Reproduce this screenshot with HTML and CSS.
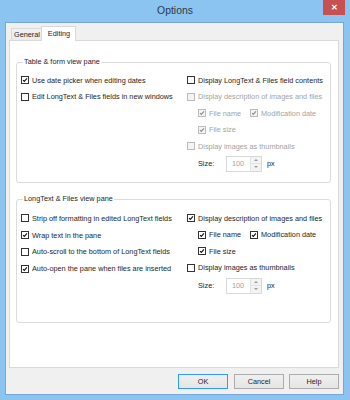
FILE: index.html
```html
<!DOCTYPE html>
<html>
<head>
<meta charset="utf-8">
<link rel="stylesheet" href="styles.css">
</head>
<body>
<div class="window">
  <div class="titlebar">
    <span></span>
    <span class="title">Options</span>
    <span class="close">&#x2715;</span>
  </div>
  <div class="client">
    <div class="tabs">
      <div class="tab">General</div>
      <div class="tab active">Editing</div>
    </div>
    <div class="panel">
      <div class="group g1">
        <div class="group-title">Table &amp; form view pane</div>
        <div class="cols">
          <div class="col left">
            <div class="row"><span class="cb on"><svg viewBox="0 0 8 8"><path d="M1.4 4.1 L3.1 5.8 L6.6 1.9"/></svg></span>Use date picker when editing dates</div>
            <div class="row"><span class="cb"></span>Edit LongText &amp; Files fields in new windows</div>
          </div>
          <div class="col right">
            <div class="row"><span class="cb"></span>Display LongText &amp; Files field contents</div>
            <div class="row dis"><span class="cb"></span>Display description of images and files</div>
            <div class="row dis sub"><span class="item"><span class="cb on"><svg viewBox="0 0 8 8"><path d="M1.4 4.1 L3.1 5.8 L6.6 1.9"/></svg></span>File name</span><span class="cb on"><svg viewBox="0 0 8 8"><path d="M1.4 4.1 L3.1 5.8 L6.6 1.9"/></svg></span>Modification date</div>
            <div class="row dis sub"><span class="cb on"><svg viewBox="0 0 8 8"><path d="M1.4 4.1 L3.1 5.8 L6.6 1.9"/></svg></span>File size</div>
            <div class="row dis"><span class="cb"></span>Display images as thumbnails</div>
            <div class="row size sub"><span class="lbl">Size:</span><span class="spin"><span class="val">100</span><span class="arrows"><span class="up"></span><span class="down"></span></span></span><span class="px">px</span></div>
          </div>
        </div>
      </div>
      <div class="group g2">
        <div class="group-title">LongText &amp; Files view pane</div>
        <div class="cols">
          <div class="col left">
            <div class="row"><span class="cb"></span>Strip off formatting in edited LongText fields</div>
            <div class="row"><span class="cb on"><svg viewBox="0 0 8 8"><path d="M1.4 4.1 L3.1 5.8 L6.6 1.9"/></svg></span>Wrap text in the pane</div>
            <div class="row"><span class="cb"></span>Auto-scroll to the bottom of LongText fields</div>
            <div class="row"><span class="cb on"><svg viewBox="0 0 8 8"><path d="M1.4 4.1 L3.1 5.8 L6.6 1.9"/></svg></span>Auto-open the pane when files are inserted</div>
          </div>
          <div class="col right">
            <div class="row"><span class="cb on"><svg viewBox="0 0 8 8"><path d="M1.4 4.1 L3.1 5.8 L6.6 1.9"/></svg></span>Display description of images and files</div>
            <div class="row sub"><span class="item"><span class="cb on"><svg viewBox="0 0 8 8"><path d="M1.4 4.1 L3.1 5.8 L6.6 1.9"/></svg></span>File name</span><span class="cb on"><svg viewBox="0 0 8 8"><path d="M1.4 4.1 L3.1 5.8 L6.6 1.9"/></svg></span>Modification date</div>
            <div class="row sub"><span class="cb on"><svg viewBox="0 0 8 8"><path d="M1.4 4.1 L3.1 5.8 L6.6 1.9"/></svg></span>File size</div>
            <div class="row"><span class="cb"></span>Display images as thumbnails</div>
            <div class="row size sub tall"><span class="lbl">Size:</span><span class="spin"><span class="val">100</span><span class="arrows"><span class="up"></span><span class="down"></span></span></span><span class="px">px</span></div>
          </div>
        </div>
      </div>
    </div>
    <div class="buttons">
      <div class="btn default">OK</div>
      <div class="btn">Cancel</div>
      <div class="btn">Help</div>
    </div>
  </div>
</div>
</body>
</html>
```
FILE: styles.css
```css
html, body {
  margin: 0;
  padding: 0;
}
body {
  width: 350px;
  height: 400px;
  overflow: hidden;
  font-family: "Liberation Sans", Arial, sans-serif;
  font-size: 7.3px;
  color: #1e1e1e;
}
.window {
  width: 350px;
  height: 400px;
  background: #8cc4f1;
  display: flex;
  flex-direction: column;
  box-sizing: border-box;
}
.titlebar {
  height: 22px;
  display: grid;
  grid-template-columns: 1fr auto 1fr;
  align-items: start;
}
.title {
  font-size: 10.4px;
  color: #2b3a4a;
  line-height: 22px;
}
.close {
  justify-self: end;
  margin-right: 5px;
  width: 22px;
  height: 15px;
  background: #c75050;
  color: #fff;
  font-size: 8px;
  font-weight: bold;
  line-height: 15px;
  text-align: center;
}
.client {
  flex: 1;
  margin: 0 6px 5px 5px;
  background: #f0f0f0;
  border: 1px solid #77a6d8;
  display: flex;
  flex-direction: column;
  padding: 3px 4px 0 3px;
}
.tabs {
  height: 14px;
  display: flex;
  align-items: flex-end;
  padding-left: 2px;
  position: relative;
  z-index: 1;
}
.tab {
  height: 12px;
  width: 31px;
  border: 1px solid #d9d9d9;
  border-bottom: none;
  background: linear-gradient(#f2f2f2, #ebebeb);
  box-sizing: border-box;
  text-align: center;
  line-height: 12px;
  padding-left: 1px;
}
.tab.active {
  height: 15px;
  width: 35px;
  background: #fff;
  margin-left: -1px;
  margin-bottom: -1px;
  line-height: 13px;
  padding-top: 0;
}
.panel {
  height: 328px;
  box-sizing: border-box;
  background: #fff;
  border: 1px solid #d9d9d9;
  padding: 21px 7px 0 6px;
  display: flex;
  flex-direction: column;
  gap: 16px;
}
.group {
  border: 1px solid #dcdcdc;
  border-radius: 3px;
  box-sizing: border-box;
  padding: 0 0 0 4px;
}
.g1 { height: 121px; }
.g2 { height: 124px; }
.group-title {
  margin: -6px 0 0 2px;
  padding: 0 1px;
  width: fit-content;
  background: #fff;
  line-height: 10px;
  color: #1e1e1e;
}
.cols {
  display: grid;
  grid-template-columns: 166px 1fr;
  padding-top: 5px;
}
.g2 .cols { padding-top: 6px; }
.g2 .left .row { height: 16.8px; }
.row {
  height: 16.5px;
  display: flex;
  align-items: center;
  white-space: nowrap;
}
.row.sub { padding-left: 11px; }
.row.size { height: 18px; }
.row.tall { height: 19px; }
.item {
  display: flex;
  align-items: center;
  width: 52px;
}
.cb {
  width: 8px;
  height: 8px;
  box-sizing: border-box;
  border: 1px solid #333;
  background: #fff;
  margin-right: 3px;
  flex: none;
  display: flex;
}
.cb svg {
  width: 6px;
  height: 6px;
}
.cb svg path {
  fill: none;
  stroke: #111;
  stroke-width: 1.5;
}
.dis { color: #a3a3a3; }
.dis .cb {
  border-color: #bcbcbc;
  background: #f4f4f4;
}
.dis .cb svg path { stroke: #8a8a8a; }
.lbl { width: 28px; }
.spin {
  width: 36px;
  height: 16px;
  box-sizing: border-box;
  border: 1px solid #d9d9d9;
  display: flex;
  background: #fff;
}
.val {
  flex: 1;
  color: #a3a3a3;
  padding-left: 5px;
  line-height: 14px;
}
.arrows {
  width: 10px;
  border-left: 1px solid #e3e3e3;
  display: flex;
  flex-direction: column;
  background: #f3f3f3;
}
.up, .down {
  flex: 1;
  display: flex;
  align-items: center;
  justify-content: center;
}
.up { border-bottom: 1px solid #e3e3e3; }
.up::before {
  content: "";
  border-left: 2px solid transparent;
  border-right: 2px solid transparent;
  border-bottom: 2px solid #9a9a9a;
}
.down::before {
  content: "";
  border-left: 2px solid transparent;
  border-right: 2px solid transparent;
  border-top: 2px solid #9a9a9a;
}
.px { margin-left: 5px; }
.buttons {
  margin-top: 6px;
  display: flex;
  justify-content: flex-end;
  gap: 5px;
}
.btn {
  width: 50px;
  height: 15px;
  box-sizing: border-box;
  border: 1px solid #acacac;
  background: linear-gradient(#f0f0f0, #e5e5e5);
  text-align: center;
  line-height: 13px;
}
.btn.default {
  border-color: #3399ff;
  margin-right: 1px;
}
```
